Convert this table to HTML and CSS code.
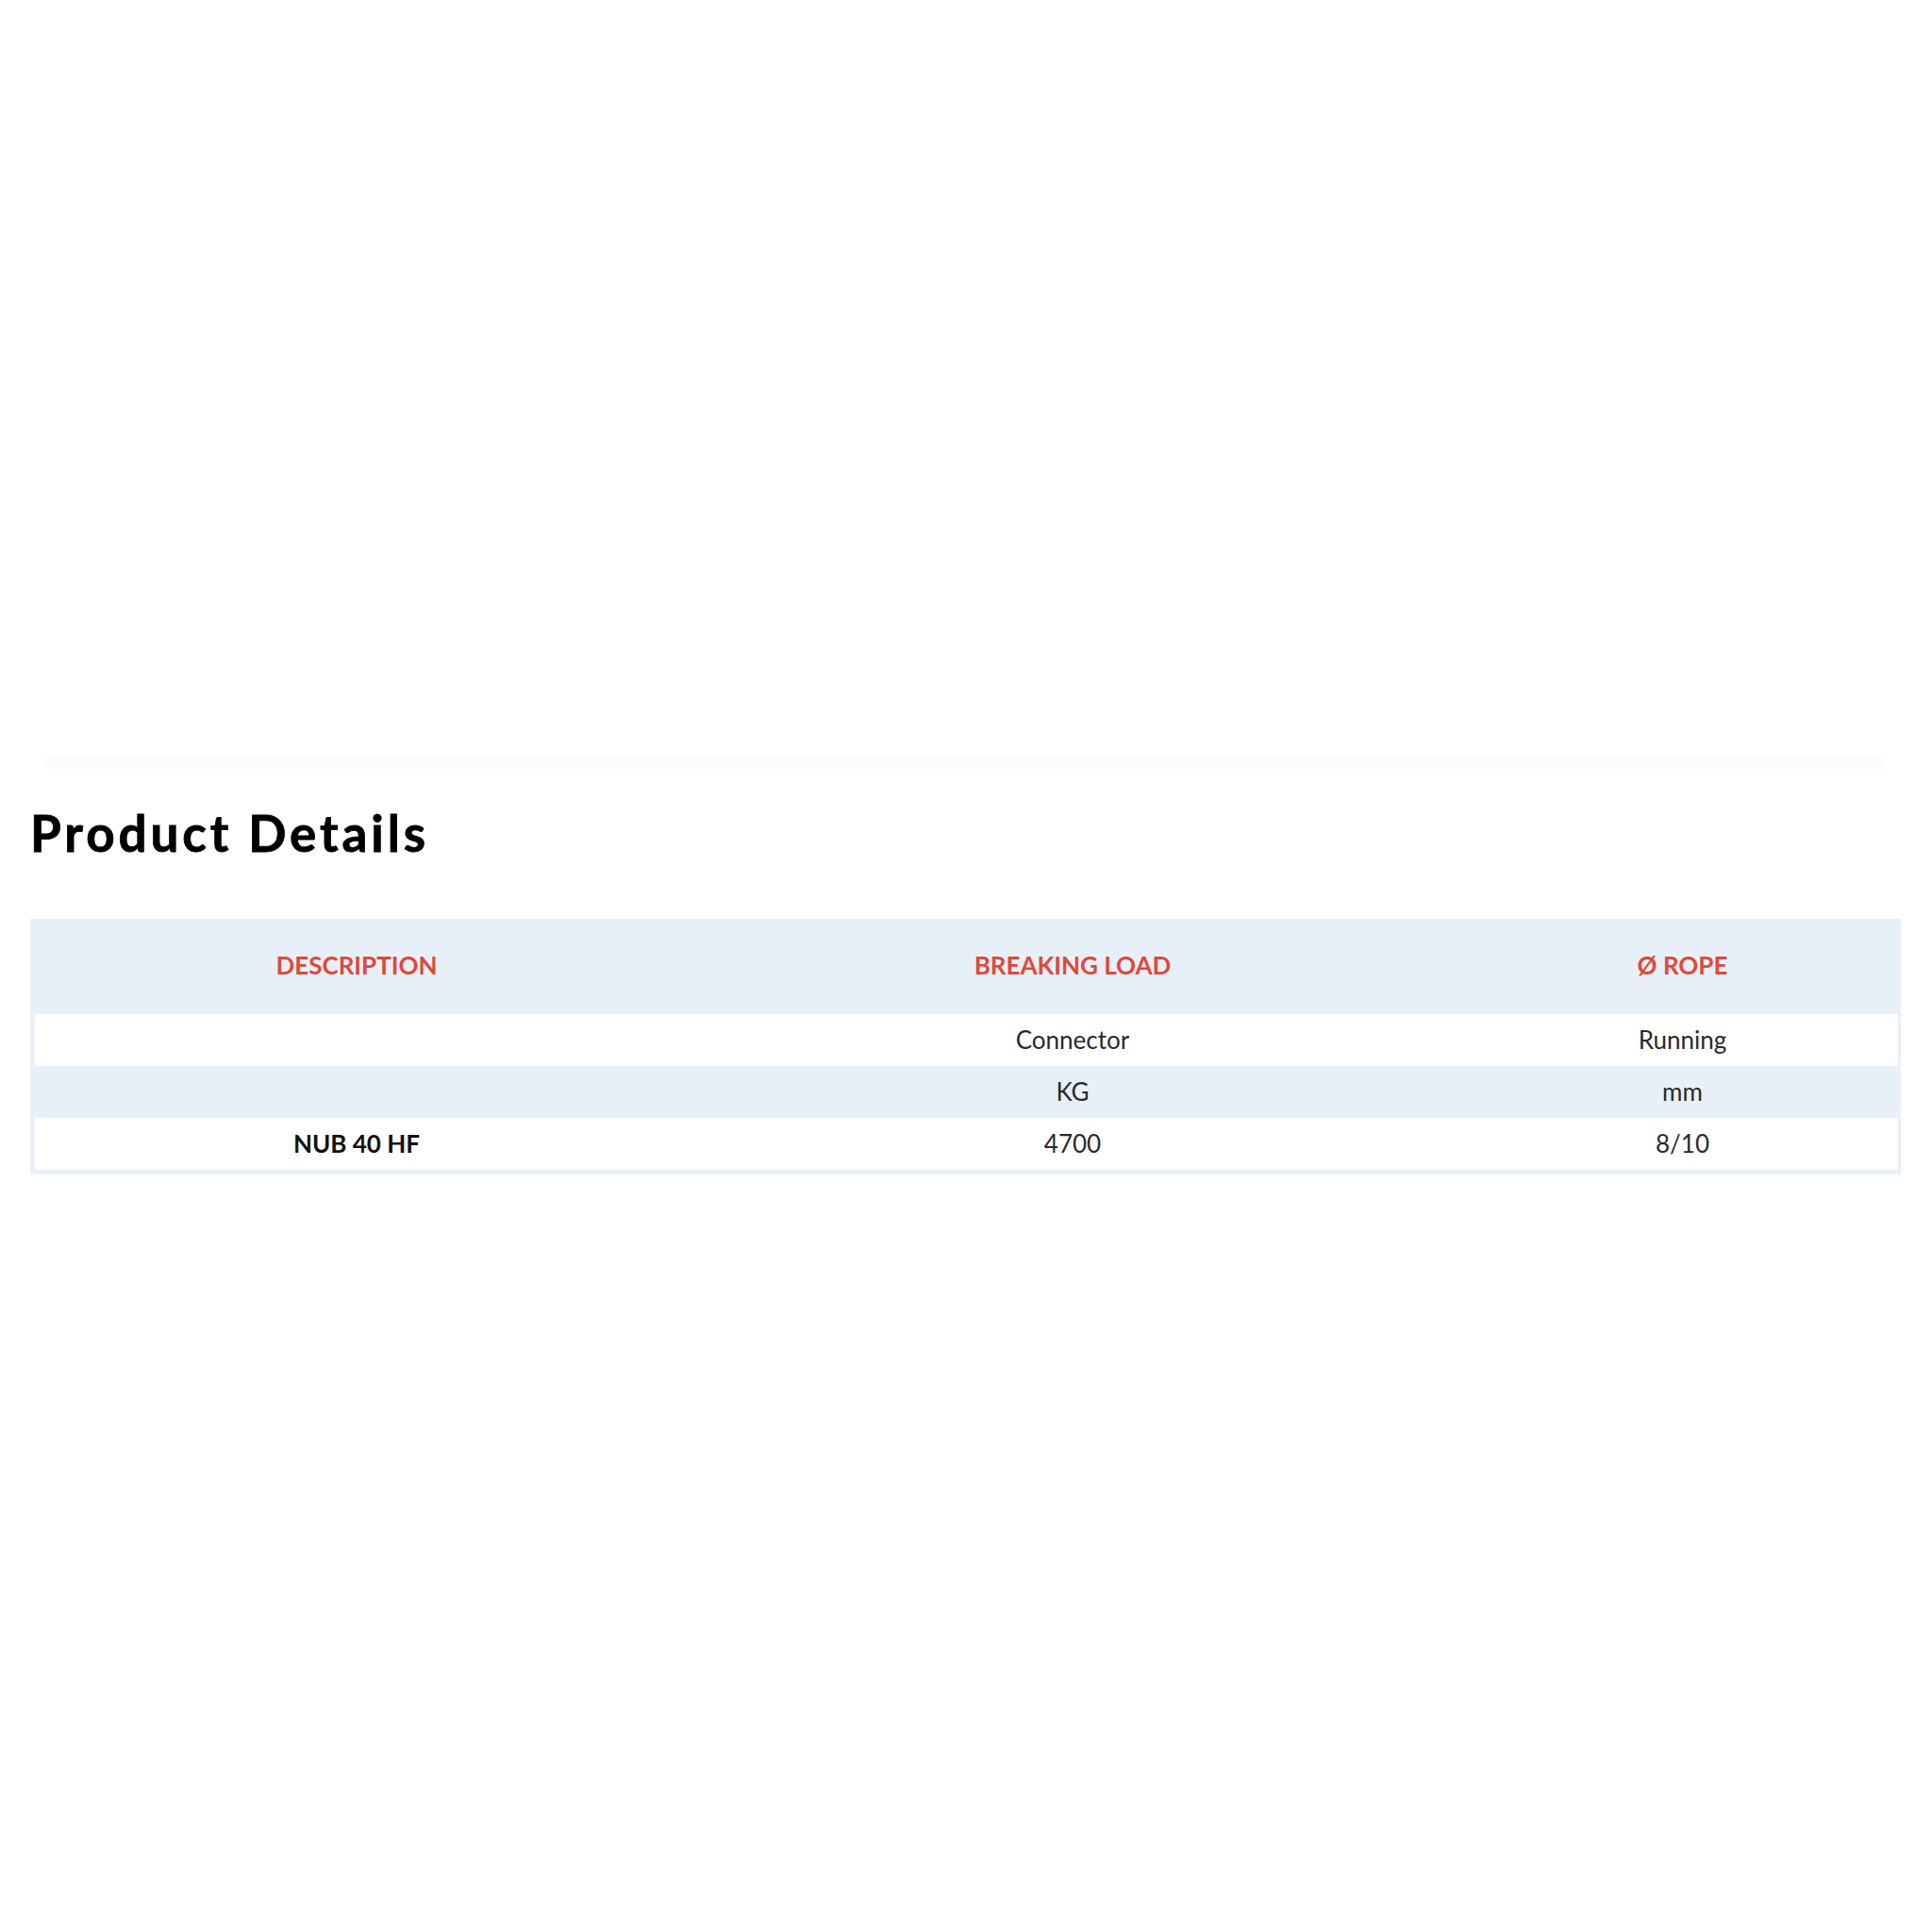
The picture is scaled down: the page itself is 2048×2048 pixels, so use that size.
FILE: index.html
```html
<!DOCTYPE html>
<html lang="en">
<head>
<meta charset="utf-8">
<title>Product Details</title>
<link rel="stylesheet" href="styles.css">
</head>
<body>
<div class="page">
  <div class="hero"></div>
  <div class="divider"></div>
  <h2 class="title">Product Details</h2>
  <table class="details">
    <thead>
      <tr>
        <th class="col-desc">DESCRIPTION</th>
        <th class="col-load">BREAKING LOAD</th>
        <th class="col-rope">Ø ROPE</th>
      </tr>
    </thead>
    <tbody>
      <tr class="row-white">
        <td></td>
        <td>Connector</td>
        <td>Running</td>
      </tr>
      <tr class="row-blue">
        <td></td>
        <td>KG</td>
        <td>mm</td>
      </tr>
      <tr class="row-white">
        <td class="name">NUB 40 HF</td>
        <td>4700</td>
        <td>8/10</td>
      </tr>
    </tbody>
  </table>
</div>
</body>
</html>
```
FILE: styles.css
```css
html, body {
  margin: 0;
  padding: 0;
  background: #ffffff;
}

.page {
  padding: 0 32px;
  font-family: "Lato", "Liberation Sans", sans-serif;
}

.hero {
  height: 800px;
}

.divider {
  height: 15px;
  margin: 0 17px 0 16px;
  background: #fcfcfc;
}

.title {
  margin: 36px 0 59px 0;
  font-family: "Lato", "Liberation Sans", sans-serif;
  font-weight: 700;
  font-size: 53px;
  line-height: 1.2;
  letter-spacing: 3.9px;
  -webkit-text-stroke: 0.8px #000000;
  color: #000000;
}

.details {
  width: 1983px;
  border-collapse: separate;
  border-spacing: 0;
  background: #e8f0f7;
  border-style: solid;
  border-color: #e8f0f7;
  border-width: 5px 3px 5px 5px;
  font-size: 26px;
  line-height: 1.2;
}

.details th {
  height: 96px;
  padding: 0 0 7px 0;
  box-sizing: border-box;
  font-weight: 700;
  color: #e0483a;
  text-align: center;
  vertical-align: middle;
}

.col-desc { width: 682px; }
.col-load { width: 836px; }
.col-rope { width: 457px; }

.details td {
  height: 55px;
  padding: 0;
  box-sizing: border-box;
  text-align: center;
  vertical-align: middle;
  color: #2a2a2a;
  font-weight: 400;
}

.row-white td {
  background: #ffffff;
}

.row-blue td {
  background: #e8f0f7;
}

.details td.name {
  font-weight: 700;
  color: #111111;
}
```
